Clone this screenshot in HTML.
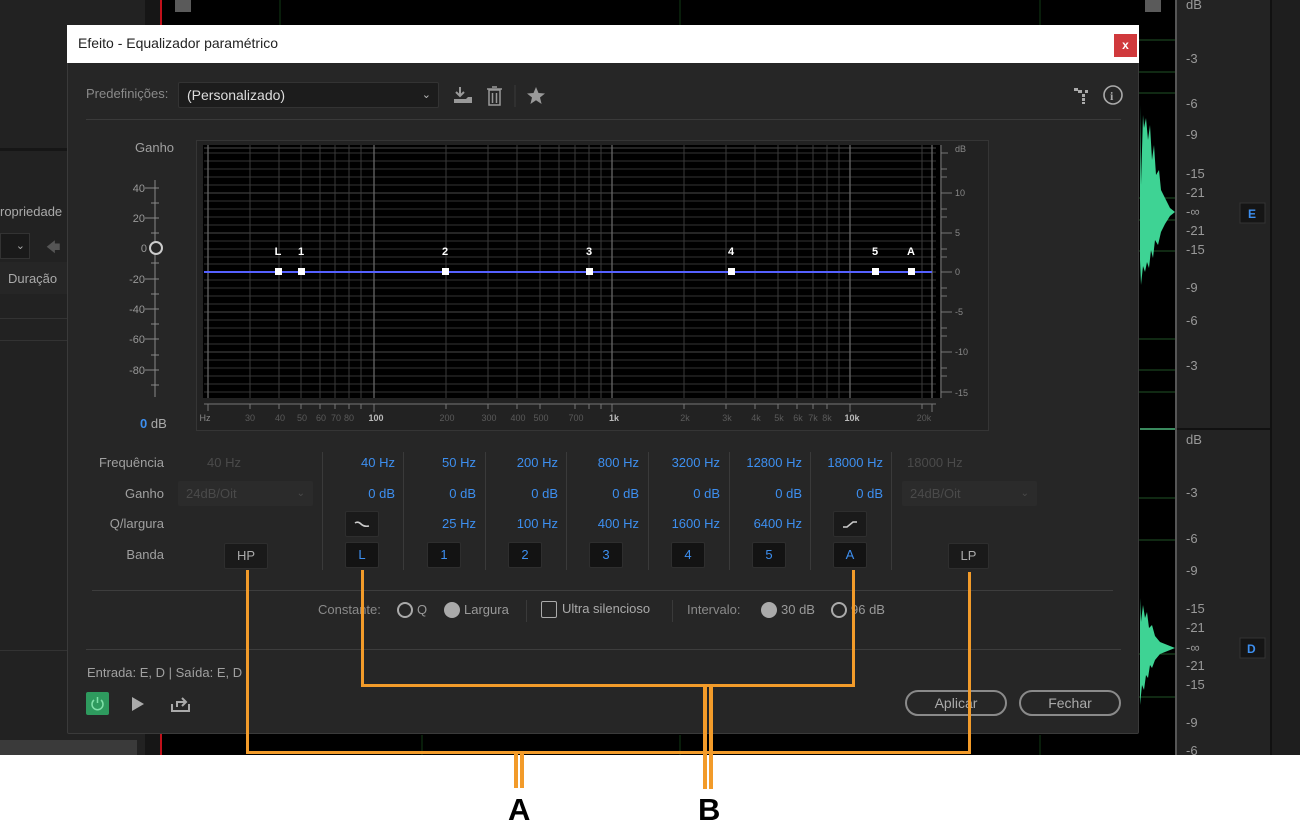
<!DOCTYPE html>
<html><head><meta charset="utf-8">
<style>
*{margin:0;padding:0;box-sizing:border-box}
body{width:1300px;height:840px;background:#fff;position:relative;overflow:hidden;font-family:"Liberation Sans",sans-serif;font-size:13px;color:#a8a8a8}
.a{position:absolute}
.r{text-align:right}
.blue{color:#3d8ff0}
.btn{position:absolute;width:34px;height:26px;background:#131313;border:1px solid #2e2e2e;border-radius:2px;color:#3d8ff0;text-align:center;line-height:24px;font-size:13px}
.vsep{position:absolute;width:1px;background:#3a3a3a;top:452px;height:118px}
.or{position:absolute;background:#f29b2a}
</style></head><body>
<!-- background app -->
<div class="a" style="left:0;top:0;width:1300px;height:755px;background:#000"></div>
<div class="a" style="left:0;top:0;width:145px;height:755px;background:#222"></div>
<div class="a" style="left:0;top:148px;width:145px;height:3px;background:#161616"></div>
<div class="a" style="left:0;top:262px;width:145px;height:32px;background:#262626"></div>
<div class="a" style="left:0;top:318px;width:145px;height:1px;background:#333"></div>
<div class="a" style="left:0;top:340px;width:145px;height:1px;background:#333"></div>
<div class="a" style="left:0;top:650px;width:145px;height:1px;background:#333"></div>
<div class="a" style="left:0;top:204px;font-size:13px;color:#aaa">ropriedade</div>
<div class="a" style="left:0;top:233px;width:30px;height:26px;border:1px solid #333;background:#1a1a1a;color:#aaa;text-align:right;padding-right:4px;line-height:24px;font-size:11px">⌄</div>
<div class="a" style="left:46px;top:237px;color:#555;font-size:14px">🡄</div>
<div class="a" style="left:8px;top:271px;font-size:13px;color:#aaa">Duração</div>
<div class="a" style="left:0;top:740px;width:137px;height:15px;background:#3a3a3a"></div>
<div class="a" style="left:145px;top:0;width:15px;height:755px;background:#161616"></div>
<div class="a" style="left:160px;top:0;width:2px;height:755px;background:#c0101a"></div>
<div class="a" style="left:175px;top:0;width:16px;height:12px;background:#5a5a5a"></div>
<div class="a" style="left:1145px;top:0;width:16px;height:12px;background:#5a5a5a"></div>
<div class="a" style="left:1175px;top:0;width:95px;height:755px;background:#232323"></div>
<div class="a" style="left:1270px;top:0;width:30px;height:755px;background:#1e1e1e;border-left:2px solid #111"></div>
<div class="a" style="left:1140px;top:428px;width:130px;height:2px;background:#111"></div>
<div class="a" style="left:1140px;top:428px;width:35px;height:2px;background:#3a8a5e"></div>
<svg class="a" style="left:1138px;top:0" width="140" height="755">
<g stroke="#1f5226" stroke-width="1">
<line x1="0" y1="40" x2="37" y2="40"/><line x1="0" y1="72" x2="37" y2="72"/><line x1="0" y1="93" x2="37" y2="93"/><line x1="0" y1="198" x2="37" y2="198"/><line x1="0" y1="220" x2="37" y2="220"/><line x1="0" y1="251" x2="37" y2="251"/>
<line x1="0" y1="339" x2="37" y2="339"/><line x1="0" y1="370" x2="37" y2="370"/><line x1="0" y1="392" x2="37" y2="392"/><line x1="0" y1="498" x2="37" y2="498"/><line x1="0" y1="540" x2="37" y2="540"/><line x1="0" y1="654" x2="37" y2="654"/><line x1="0" y1="697" x2="37" y2="697"/>
</g>
<path d="M2 105 L3 185 L5 115 L6 128 L8 118 L10 140 L12 125 L14 160 L16 145 L18 175 L21 170 L23 190 L27 198 L32 208 L37 212 L32 216 L27 224 L23 232 L20 245 L17 240 L15 258 L13 250 L11 268 L9 262 L7 272 L5 266 L3 285 L2 260 Z" fill="#3ed394"/>
<path d="M2 598 L3 622 L5 605 L7 618 L9 612 L11 628 L14 625 L17 636 L22 642 L37 648 L22 654 L17 660 L14 668 L12 665 L10 678 L8 675 L6 690 L4 685 L2 705 Z" fill="#3ed394"/>
<line x1="38" y1="0" x2="38" y2="755" stroke="#8a8a8a"/>
<g fill="#999" font-size="13" font-family="Liberation Sans"><text x="48" y="9">dB</text><text x="48" y="63">-3</text><text x="48" y="108">-6</text><text x="48" y="139">-9</text><text x="48" y="178">-15</text><text x="48" y="197">-21</text><text x="48" y="216">-∞</text><text x="48" y="235">-21</text><text x="48" y="254">-15</text><text x="48" y="292">-9</text><text x="48" y="325">-6</text><text x="48" y="370">-3</text>
<text x="48" y="444">dB</text><text x="48" y="497">-3</text><text x="48" y="543">-6</text><text x="48" y="575">-9</text><text x="48" y="613">-15</text><text x="48" y="632">-21</text><text x="48" y="652">-∞</text><text x="48" y="670">-21</text><text x="48" y="689">-15</text><text x="48" y="727">-9</text><text x="48" y="755">-6</text></g>
<rect x="102" y="203" width="25" height="20" fill="#151515" stroke="#333"/><text x="110" y="218" fill="#3d8ff0" font-size="12" font-weight="bold" font-family="Liberation Sans">E</text>
<rect x="102" y="638" width="25" height="20" fill="#151515" stroke="#333"/><text x="109" y="653" fill="#3d8ff0" font-size="12" font-weight="bold" font-family="Liberation Sans">D</text>
</svg>
<svg class="a" style="left:160px;top:0" width="980" height="755"><g stroke="#0f3a14"><line x1="120" y1="0" x2="120" y2="25"/><line x1="262" y1="735" x2="262" y2="755"/><line x1="520" y1="0" x2="520" y2="25"/><line x1="520" y1="735" x2="520" y2="755"/><line x1="880" y1="0" x2="880" y2="25"/><line x1="880" y1="735" x2="880" y2="755"/></g></svg>

<!-- dialog -->
<div class="a" style="left:67px;top:25px;width:1072px;height:709px;background:#262626;border:1px solid #3a3a3a;border-radius:2px"></div>
<div class="a" style="left:67px;top:25px;width:1072px;height:38px;background:#fff"></div>
<div class="a" style="left:78px;top:35px;font-size:14px;color:#222">Efeito - Equalizador paramétrico</div>
<div class="a" style="left:1114px;top:34px;width:23px;height:23px;background:#d0393c;color:#fff;text-align:center;line-height:22px;font-size:12px;font-weight:bold">x</div>

<div class="a" style="left:86px;top:86px;font-size:13px;color:#8a8a8a">Predefinições:</div>
<div class="a" style="left:178px;top:82px;width:261px;height:26px;background:#1c1c1c;border:1px solid #333;border-radius:2px;color:#ddd;font-size:14px;line-height:24px;padding-left:8px">(Personalizado)<span style="position:absolute;right:7px;top:0;font-size:11px;color:#bbb">⌄</span></div>
<svg class="a" style="left:452px;top:84px" width="100" height="24">
<path d="M8 3 V12 M4 8 L8 12 L12 8" stroke="#999" stroke-width="2" fill="none"/><path d="M2 13 V19 H20 V13 H16 L14 15 H2" fill="#999"/>
<g stroke="#999" stroke-width="1.5" fill="none"><rect x="37" y="6" width="11" height="15"/><line x1="35" y1="5" x2="50" y2="5"/><line x1="40" y1="3" x2="45" y2="3"/><line x1="40.5" y1="9" x2="40.5" y2="19"/><line x1="44.5" y1="9" x2="44.5" y2="19"/></g>
<line x1="63" y1="1" x2="63" y2="23" stroke="#3a3a3a"/>
<path d="M84 3 L86.5 9 L93 9.5 L88 13.5 L89.6 20 L84 16.3 L78.4 20 L80 13.5 L75 9.5 L81.5 9 Z" fill="#999"/>
</svg>
<svg class="a" style="left:1072px;top:84px" width="54" height="24">
<g fill="#aaa"><rect x="2" y="4" width="4" height="3"/><rect x="6" y="6" width="4" height="3"/><rect x="10" y="10" width="3" height="3"/><rect x="10" y="14" width="3" height="3"/><rect x="10" y="18" width="3" height="2"/><rect x="13" y="6" width="3" height="3"/></g>
<circle cx="41" cy="11" r="9" stroke="#aaa" stroke-width="1.6" fill="none"/><text x="38" y="16" fill="#aaa" font-size="12" font-weight="bold" font-family="Liberation Serif">i</text>
</svg>
<div class="a" style="left:86px;top:119px;width:1035px;height:1px;background:#3a3a3a"></div>

<!-- gain slider -->
<div class="a" style="left:135px;top:140px;font-size:13px;color:#a0a0a0">Ganho</div>
<svg class="a" style="left:125px;top:175px" width="50" height="235">
<line x1="30" y1="5" x2="30" y2="222" stroke="#888"/>
<g stroke="#888"><line x1="26" y1="13" x2="34" y2="13"/><line x1="26" y1="28" x2="34" y2="28"/><line x1="26" y1="43" x2="34" y2="43"/><line x1="26" y1="58" x2="34" y2="58"/><line x1="26" y1="88" x2="34" y2="88"/><line x1="26" y1="104" x2="34" y2="104"/><line x1="26" y1="119" x2="34" y2="119"/><line x1="26" y1="134" x2="34" y2="134"/><line x1="26" y1="149" x2="34" y2="149"/><line x1="26" y1="164" x2="34" y2="164"/><line x1="26" y1="180" x2="34" y2="180"/><line x1="26" y1="195" x2="34" y2="195"/><line x1="26" y1="210" x2="34" y2="210"/>
<line x1="20" y1="13" x2="26" y2="13"/><line x1="20" y1="43" x2="26" y2="43"/><line x1="20" y1="104" x2="26" y2="104"/><line x1="20" y1="134" x2="26" y2="134"/><line x1="20" y1="164" x2="26" y2="164"/><line x1="20" y1="195" x2="26" y2="195"/></g>
<circle cx="31" cy="73" r="6" fill="#262626" stroke="#ccc" stroke-width="2"/>
<g fill="#999" font-size="11" font-family="Liberation Sans" text-anchor="end"><text x="20" y="17">40</text><text x="20" y="47">20</text><text x="22" y="77">0</text><text x="20" y="108">-20</text><text x="20" y="138">-40</text><text x="20" y="168">-60</text><text x="20" y="199">-80</text></g>
</svg>
<div class="a" style="left:140px;top:416px;font-size:13px;color:#aaa"><span class="blue" style="font-weight:bold">0</span> dB</div>

<!-- graph -->
<div class="a" style="left:196px;top:140px;width:793px;height:291px;border:1px solid #353535;background:#222"></div>
<svg class="a" style="left:196px;top:140px" width="793" height="291" font-family="Liberation Sans">
<rect x="7" y="5" width="737" height="253" fill="#000"/>
<g stroke="#333" stroke-width="1">
<line x1="8" y1="13" x2="740" y2="13"/><line x1="8" y1="21" x2="740" y2="21"/><line x1="8" y1="29" x2="740" y2="29"/><line x1="8" y1="37" x2="740" y2="37"/><line x1="8" y1="45" x2="740" y2="45"/><line x1="8" y1="61" x2="740" y2="61"/><line x1="8" y1="69" x2="740" y2="69"/><line x1="8" y1="77" x2="740" y2="77"/><line x1="8" y1="85" x2="740" y2="85"/><line x1="8" y1="101" x2="740" y2="101"/><line x1="8" y1="109" x2="740" y2="109"/><line x1="8" y1="117" x2="740" y2="117"/><line x1="8" y1="124" x2="740" y2="124"/><line x1="8" y1="140" x2="740" y2="140"/><line x1="8" y1="148" x2="740" y2="148"/><line x1="8" y1="156" x2="740" y2="156"/><line x1="8" y1="164" x2="740" y2="164"/><line x1="8" y1="180" x2="740" y2="180"/><line x1="8" y1="188" x2="740" y2="188"/><line x1="8" y1="196" x2="740" y2="196"/><line x1="8" y1="204" x2="740" y2="204"/><line x1="8" y1="220" x2="740" y2="220"/><line x1="8" y1="228" x2="740" y2="228"/><line x1="8" y1="236" x2="740" y2="236"/><line x1="8" y1="244" x2="740" y2="244"/><line x1="8" y1="252" x2="740" y2="252"/>
</g>
<g stroke="#4a4a4a" stroke-width="1">
<line x1="8" y1="8" x2="740" y2="8"/><line x1="8" y1="53" x2="740" y2="53"/><line x1="8" y1="93" x2="740" y2="93"/><line x1="8" y1="132" x2="740" y2="132"/><line x1="8" y1="172" x2="740" y2="172"/><line x1="8" y1="212" x2="740" y2="212"/>
</g>
<g stroke="#3a3a3a" stroke-width="1">
<line x1="54" y1="5" x2="54" y2="258"/><line x1="83" y1="5" x2="83" y2="258"/><line x1="105" y1="5" x2="105" y2="258"/><line x1="124" y1="5" x2="124" y2="258"/><line x1="139" y1="5" x2="139" y2="258"/><line x1="153" y1="5" x2="153" y2="258"/><line x1="165" y1="5" x2="165" y2="258"/>
<line x1="250" y1="5" x2="250" y2="258"/><line x1="292" y1="5" x2="292" y2="258"/><line x1="321" y1="5" x2="321" y2="258"/><line x1="344" y1="5" x2="344" y2="258"/><line x1="363" y1="5" x2="363" y2="258"/><line x1="379" y1="5" x2="379" y2="258"/><line x1="393" y1="5" x2="393" y2="258"/><line x1="405" y1="5" x2="405" y2="258"/>
<line x1="488" y1="5" x2="488" y2="258"/><line x1="530" y1="5" x2="530" y2="258"/><line x1="559" y1="5" x2="559" y2="258"/><line x1="582" y1="5" x2="582" y2="258"/><line x1="601" y1="5" x2="601" y2="258"/><line x1="617" y1="5" x2="617" y2="258"/><line x1="631" y1="5" x2="631" y2="258"/><line x1="643" y1="5" x2="643" y2="258"/><line x1="726" y1="5" x2="726" y2="258"/>
</g>
<g stroke="#666" stroke-width="1.3"><line x1="12" y1="5" x2="12" y2="258"/><line x1="178" y1="5" x2="178" y2="258"/><line x1="416" y1="5" x2="416" y2="258"/><line x1="654" y1="5" x2="654" y2="258"/><line x1="736" y1="5" x2="736" y2="258"/></g>
<line x1="8" y1="132" x2="736" y2="132" stroke="#5560ff" stroke-width="2"/>
<g fill="#fff"><rect x="79" y="128" width="7" height="7"/><rect x="102" y="128" width="7" height="7"/><rect x="246" y="128" width="7" height="7"/><rect x="390" y="128" width="7" height="7"/><rect x="532" y="128" width="7" height="7"/><rect x="676" y="128" width="7" height="7"/><rect x="712" y="128" width="7" height="7"/></g>
<g fill="#fff" font-size="11" font-weight="bold" text-anchor="middle"><text x="82" y="115">L</text><text x="105" y="115">1</text><text x="249" y="115">2</text><text x="393" y="115">3</text><text x="535" y="115">4</text><text x="679" y="115">5</text><text x="715" y="115">A</text></g>
<g stroke="#777"><line x1="745" y1="5" x2="745" y2="258"/>
<line x1="745" y1="13" x2="752" y2="13"/><line x1="745" y1="53" x2="756" y2="53"/><line x1="745" y1="93" x2="756" y2="93"/><line x1="745" y1="132" x2="756" y2="132"/><line x1="745" y1="172" x2="756" y2="172"/><line x1="745" y1="212" x2="756" y2="212"/><line x1="745" y1="252" x2="756" y2="252"/>
<line x1="745" y1="29" x2="751" y2="29"/><line x1="745" y1="37" x2="751" y2="37"/><line x1="745" y1="69" x2="751" y2="69"/><line x1="745" y1="77" x2="751" y2="77"/><line x1="745" y1="109" x2="751" y2="109"/><line x1="745" y1="117" x2="751" y2="117"/><line x1="745" y1="148" x2="751" y2="148"/><line x1="745" y1="156" x2="751" y2="156"/><line x1="745" y1="188" x2="751" y2="188"/><line x1="745" y1="196" x2="751" y2="196"/><line x1="745" y1="228" x2="751" y2="228"/><line x1="745" y1="236" x2="751" y2="236"/>
<line x1="8" y1="264" x2="740" y2="264"/></g>
<g fill="#888" font-size="9"><text x="759" y="12">dB</text><text x="759" y="56">10</text><text x="759" y="96">5</text><text x="759" y="135">0</text><text x="759" y="175">-5</text><text x="759" y="215">-10</text><text x="759" y="256">-15</text></g>
<g stroke="#777"><line x1="12" y1="264" x2="12" y2="271"/><line x1="54" y1="264" x2="54" y2="269"/><line x1="83" y1="264" x2="83" y2="269"/><line x1="105" y1="264" x2="105" y2="269"/><line x1="124" y1="264" x2="124" y2="269"/><line x1="139" y1="264" x2="139" y2="269"/><line x1="153" y1="264" x2="153" y2="269"/><line x1="165" y1="264" x2="165" y2="269"/><line x1="178" y1="264" x2="178" y2="272"/><line x1="250" y1="264" x2="250" y2="269"/><line x1="292" y1="264" x2="292" y2="269"/><line x1="321" y1="264" x2="321" y2="269"/><line x1="344" y1="264" x2="344" y2="269"/><line x1="379" y1="264" x2="379" y2="269"/><line x1="393" y1="264" x2="393" y2="269"/><line x1="405" y1="264" x2="405" y2="269"/><line x1="416" y1="264" x2="416" y2="272"/><line x1="488" y1="264" x2="488" y2="269"/><line x1="530" y1="264" x2="530" y2="269"/><line x1="559" y1="264" x2="559" y2="269"/><line x1="582" y1="264" x2="582" y2="269"/><line x1="601" y1="264" x2="601" y2="269"/><line x1="617" y1="264" x2="617" y2="269"/><line x1="631" y1="264" x2="631" y2="269"/><line x1="654" y1="264" x2="654" y2="272"/><line x1="726" y1="264" x2="726" y2="269"/><line x1="736" y1="264" x2="736" y2="272"/></g>
<g fill="#5a5a5a" font-size="9" text-anchor="middle"><text x="9" y="281" fill="#888">Hz</text><text x="54" y="281">30</text><text x="84" y="281">40</text><text x="106" y="281">50</text><text x="125" y="281">60</text><text x="140" y="281">70</text><text x="153" y="281">80</text><text x="180" y="281" fill="#bbb" font-weight="bold">100</text><text x="251" y="281">200</text><text x="293" y="281">300</text><text x="322" y="281">400</text><text x="345" y="281">500</text><text x="380" y="281">700</text><text x="418" y="281" fill="#bbb" font-weight="bold">1k</text><text x="489" y="281">2k</text><text x="531" y="281">3k</text><text x="560" y="281">4k</text><text x="583" y="281">5k</text><text x="602" y="281">6k</text><text x="617" y="281">7k</text><text x="631" y="281">8k</text><text x="656" y="281" fill="#bbb" font-weight="bold">10k</text><text x="728" y="281">20k</text></g>
</svg>

<!-- params -->
<div class="a r" style="left:60px;width:104px;top:455px;color:#a0a0a0">Frequência</div>
<div class="a r" style="left:60px;width:104px;top:486px;color:#a0a0a0">Ganho</div>
<div class="a r" style="left:60px;width:104px;top:516px;color:#a0a0a0">Q/largura</div>
<div class="a r" style="left:60px;width:104px;top:547px;color:#a0a0a0">Banda</div>
<div class="a" style="left:207px;top:455px;color:#4a4a4a">40 Hz</div>
<div class="a" style="left:178px;top:481px;width:135px;height:25px;background:#2b2b2b;border-radius:2px;color:#4a4a4a;padding-left:8px;line-height:25px;font-size:13px">24dB/Oit<span style="position:absolute;right:8px;font-size:10px">⌄</span></div>
<div class="a" style="left:907px;top:455px;color:#4a4a4a">18000 Hz</div>
<div class="a" style="left:902px;top:481px;width:135px;height:25px;background:#2b2b2b;border-radius:2px;color:#4a4a4a;padding-left:8px;line-height:25px;font-size:13px">24dB/Oit<span style="position:absolute;right:8px;font-size:10px">⌄</span></div>
<div class="vsep" style="left:322px"></div><div class="vsep" style="left:403px"></div><div class="vsep" style="left:485px"></div><div class="vsep" style="left:566px"></div><div class="vsep" style="left:648px"></div><div class="vsep" style="left:729px"></div><div class="vsep" style="left:810px"></div><div class="vsep" style="left:891px"></div>

<div class="a r blue" style="left:325px;width:70px;top:455px">40 Hz</div>
<div class="a r blue" style="left:406px;width:70px;top:455px">50 Hz</div>
<div class="a r blue" style="left:488px;width:70px;top:455px">200 Hz</div>
<div class="a r blue" style="left:569px;width:70px;top:455px">800 Hz</div>
<div class="a r blue" style="left:650px;width:70px;top:455px">3200 Hz</div>
<div class="a r blue" style="left:732px;width:70px;top:455px">12800 Hz</div>
<div class="a r blue" style="left:813px;width:70px;top:455px">18000 Hz</div>
<div class="a r blue" style="left:325px;width:70px;top:486px">0 dB</div>
<div class="a r blue" style="left:406px;width:70px;top:486px">0 dB</div>
<div class="a r blue" style="left:488px;width:70px;top:486px">0 dB</div>
<div class="a r blue" style="left:569px;width:70px;top:486px">0 dB</div>
<div class="a r blue" style="left:650px;width:70px;top:486px">0 dB</div>
<div class="a r blue" style="left:732px;width:70px;top:486px">0 dB</div>
<div class="a r blue" style="left:813px;width:70px;top:486px">0 dB</div>
<div class="a r blue" style="left:406px;width:70px;top:516px">25 Hz</div>
<div class="a r blue" style="left:488px;width:70px;top:516px">100 Hz</div>
<div class="a r blue" style="left:569px;width:70px;top:516px">400 Hz</div>
<div class="a r blue" style="left:650px;width:70px;top:516px">1600 Hz</div>
<div class="a r blue" style="left:732px;width:70px;top:516px">6400 Hz</div>
<div class="btn" style="left:345px;top:511px;background:#1a1a1a"><svg width="32" height="24"><path d="M9 11 Q12 9 15 12 T23 14" stroke="#ccc" stroke-width="1.6" fill="none"/></svg></div>
<div class="btn" style="left:833px;top:511px;background:#1a1a1a"><svg width="32" height="24"><path d="M9 15 H13 L19 10 H23" stroke="#ccc" stroke-width="1.6" fill="none"/></svg></div>
<div class="btn" style="left:224px;top:543px;width:44px;color:#aaa;background:#1a1a1a">HP</div>
<div class="btn" style="left:345px;top:542px">L</div>
<div class="btn" style="left:427px;top:542px">1</div>
<div class="btn" style="left:508px;top:542px">2</div>
<div class="btn" style="left:589px;top:542px">3</div>
<div class="btn" style="left:671px;top:542px">4</div>
<div class="btn" style="left:752px;top:542px">5</div>
<div class="btn" style="left:833px;top:542px">A</div>
<div class="btn" style="left:948px;top:543px;width:41px;color:#aaa;background:#1a1a1a">LP</div>

<div class="a" style="left:92px;top:590px;width:1021px;height:1px;background:#3d3d3d"></div>
<div class="a" style="left:318px;top:602px;color:#8a8a8a">Constante:</div>
<div class="a" style="left:397px;top:602px;width:16px;height:16px;border:2px solid #aaa;border-radius:50%"></div>
<div class="a" style="left:417px;top:602px;color:#999">Q</div>
<div class="a" style="left:444px;top:602px;width:16px;height:16px;background:#aaa;border-radius:50%"></div>
<div class="a" style="left:464px;top:602px;color:#999">Largura</div>
<div class="a" style="left:526px;top:600px;width:1px;height:22px;background:#3a3a3a"></div>
<div class="a" style="left:541px;top:601px;width:16px;height:17px;border:1.5px solid #aaa;border-radius:2px"></div>
<div class="a" style="left:562px;top:601px;color:#aaa">Ultra silencioso</div>
<div class="a" style="left:672px;top:600px;width:1px;height:22px;background:#3a3a3a"></div>
<div class="a" style="left:687px;top:602px;color:#8a8a8a">Intervalo:</div>
<div class="a" style="left:761px;top:602px;width:16px;height:16px;background:#aaa;border-radius:50%"></div>
<div class="a" style="left:781px;top:602px;color:#999">30 dB</div>
<div class="a" style="left:831px;top:602px;width:16px;height:16px;border:2px solid #aaa;border-radius:50%"></div>
<div class="a" style="left:851px;top:602px;color:#999">96 dB</div>
<div class="a" style="left:86px;top:649px;width:1035px;height:1px;background:#3d3d3d"></div>

<div class="a" style="left:87px;top:665px;color:#a0a0a0">Entrada: E, D | Saída: E, D</div>
<div class="a" style="left:86px;top:692px;width:23px;height:23px;background:#2e9a5e;border-radius:2px"><svg width="23" height="23"><path d="M8 8 A5.5 5.5 0 1 0 15 8" stroke="#7fe0a8" stroke-width="1.5" fill="none"/><line x1="11.5" y1="5" x2="11.5" y2="11" stroke="#7fe0a8" stroke-width="1.5"/></svg></div>
<svg class="a" style="left:130px;top:695px" width="70" height="18"><path d="M2 2 L14 9 L2 16 Z" fill="#aaa"/><path d="M42 9 V16 H59 V9" stroke="#aaa" stroke-width="2" fill="none"/><path d="M47 12 V7 H55 M52 3 L56 7 L52 11" stroke="#aaa" stroke-width="2" fill="none"/></svg>
<div class="a" style="left:905px;top:690px;width:102px;height:26px;border:2px solid #8a8a8a;border-radius:13px;text-align:center;line-height:22px;color:#aaa;font-size:14px">Aplicar</div>
<div class="a" style="left:1019px;top:690px;width:102px;height:26px;border:2px solid #8a8a8a;border-radius:13px;text-align:center;line-height:22px;color:#aaa;font-size:14px">Fechar</div>

<!-- annotations -->
<div class="or" style="left:246px;top:570px;width:3px;height:184px"></div>
<div class="or" style="left:246px;top:751px;width:725px;height:3px"></div>
<div class="or" style="left:968px;top:572px;width:3px;height:182px"></div>
<div class="or" style="left:361px;top:570px;width:3px;height:117px"></div>
<div class="or" style="left:361px;top:684px;width:494px;height:3px"></div>
<div class="or" style="left:852px;top:570px;width:3px;height:117px"></div>
<div class="or" style="left:514px;top:753px;width:4px;height:35px"></div>
<div class="or" style="left:520px;top:753px;width:4px;height:35px"></div>
<div class="or" style="left:703px;top:686px;width:4px;height:103px"></div>
<div class="or" style="left:709px;top:686px;width:4px;height:103px"></div>
<div class="a" style="left:508px;top:792px;font-size:31px;font-weight:bold;color:#000">A</div>
<div class="a" style="left:698px;top:792px;font-size:31px;font-weight:bold;color:#000">B</div>
</body></html>
